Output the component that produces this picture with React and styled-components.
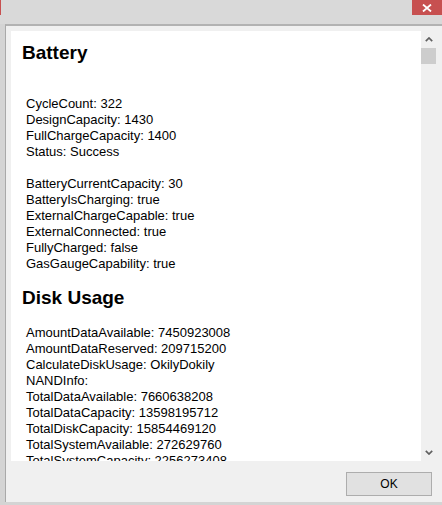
import React from "react";
import styled, { createGlobalStyle } from "styled-components";

const GlobalStyle = createGlobalStyle`
  html, body {
    margin: 0;
    padding: 0;
    background: #d4d4d4;
  }
  body {
    font-family: "Liberation Sans", Arial, sans-serif;
  }
`;

const sections = [
  {
    title: "Battery",
    leadBlank: true,
    groups: [
      ["CycleCount: 322", "DesignCapacity: 1430", "FullChargeCapacity: 1400", "Status: Success"],
      [
        "BatteryCurrentCapacity: 30",
        "BatteryIsCharging: true",
        "ExternalChargeCapable: true",
        "ExternalConnected: true",
        "FullyCharged: false",
        "GasGaugeCapability: true",
      ],
    ],
  },
  {
    title: "Disk Usage",
    groups: [
      [
        "AmountDataAvailable: 7450923008",
        "AmountDataReserved: 209715200",
        "CalculateDiskUsage: OkilyDokily",
        "NANDInfo:",
        "TotalDataAvailable: 7660638208",
        "TotalDataCapacity: 13598195712",
        "TotalDiskCapacity: 15854469120",
        "TotalSystemAvailable: 272629760",
        "TotalSystemCapacity: 2256273408",
      ],
    ],
  },
];

const Window = styled.div`
  width: 442px;
  height: 505px;
  display: flex;
  flex-direction: column;
  background: #d4d4d4;
  overflow: hidden;
`;

const TitleBar = styled.div`
  height: 24px;
  flex: none;
  display: flex;
  justify-content: space-between;
  align-items: flex-start;
  background: #d9d9d9;
`;

const EdgeMark = styled.div`
  width: 1px;
  height: 15px;
  background: #c75050;
`;

const CloseButton = styled.div`
  width: 30px;
  height: 15px;
  display: flex;
  align-items: center;
  justify-content: center;
  background: #c75050;
`;

const Client = styled.div`
  height: 478px;
  box-sizing: border-box;
  margin-left: 5px;
  border-top: 2px solid #b2b2b2;
  border-left: 1px solid #a9a9a9;
  background: #f0f0f0;
  padding: 5px 6px 0 5px;
  display: flex;
  flex-direction: column;
`;

const ScrollView = styled.div`
  height: 430px;
  flex: none;
  display: flex;
`;

const Content = styled.div`
  flex: 1;
  background: #ffffff;
  overflow: hidden;
  padding: 11px 0 0 11px;
  color: #000;
`;

const Section = styled.section`
  margin-bottom: 15px;
`;

const Heading = styled.h2`
  margin: 0 0 16px;
  font-size: 19px;
  line-height: 22px;
  font-weight: bold;
`;

const Group = styled.div`
  padding: ${(p) => (p.$blank ? "16px" : "0")} 0 0 4px;
`;

const Line = styled.div`
  font-size: 13px;
  line-height: 16px;
  white-space: nowrap;
`;

const Scrollbar = styled.div`
  width: 15px;
  flex: none;
  display: flex;
  flex-direction: column;
  background: #f0f0f0;
`;

const ArrowButton = styled.div`
  height: 17px;
  flex: none;
  display: flex;
  align-items: center;
  justify-content: center;
`;

const Track = styled.div`
  flex: 1;
`;

const Thumb = styled.div`
  height: 16px;
  background: #cdcdcd;
`;

const Footer = styled.div`
  display: flex;
  justify-content: flex-end;
  padding: 11px 4px 0 0;
`;

const Button = styled.button`
  width: 86px;
  height: 24px;
  box-sizing: border-box;
  border: 1px solid #adadad;
  background: #e1e1e1;
  font-family: "Liberation Sans", Arial, sans-serif;
  font-size: 12px;
  color: #000;
  padding: 0;
  border-radius: 0;
`;

const Chevron = ({ down }) => (
  <svg width="8" height="5" viewBox="0 0 8 5">
    <path
      d={down ? "M0.8 0.8 L4 4 L7.2 0.8" : "M0.8 4.2 L4 1 L7.2 4.2"}
      fill="none"
      stroke="#606060"
      strokeWidth="1.7"
    />
  </svg>
);

const CloseGlyph = () => (
  <svg width="10" height="8" viewBox="0 0 10 8">
    <path d="M1 0.5 L9 7.5 M9 0.5 L1 7.5" stroke="#ffffff" strokeWidth="1.8" />
  </svg>
);

export default function App() {
  return (
    <>
      <GlobalStyle />
      <Window>
        <TitleBar>
          <EdgeMark />
          <CloseButton>
            <CloseGlyph />
          </CloseButton>
        </TitleBar>
        <Client>
          <ScrollView>
            <Content>
              {sections.map((s) => (
                <Section key={s.title}>
                  <Heading>{s.title}</Heading>
                  {s.groups.map((g, i) => (
                    <Group key={i} $blank={i > 0 || s.leadBlank}>
                      {g.map((line) => (
                        <Line key={line}>{line}</Line>
                      ))}
                    </Group>
                  ))}
                </Section>
              ))}
            </Content>
            <Scrollbar>
              <ArrowButton>
                <Chevron />
              </ArrowButton>
              <Track>
                <Thumb />
              </Track>
              <ArrowButton>
                <Chevron down />
              </ArrowButton>
            </Scrollbar>
          </ScrollView>
          <Footer>
            <Button>OK</Button>
          </Footer>
        </Client>
      </Window>
    </>
  );
}
